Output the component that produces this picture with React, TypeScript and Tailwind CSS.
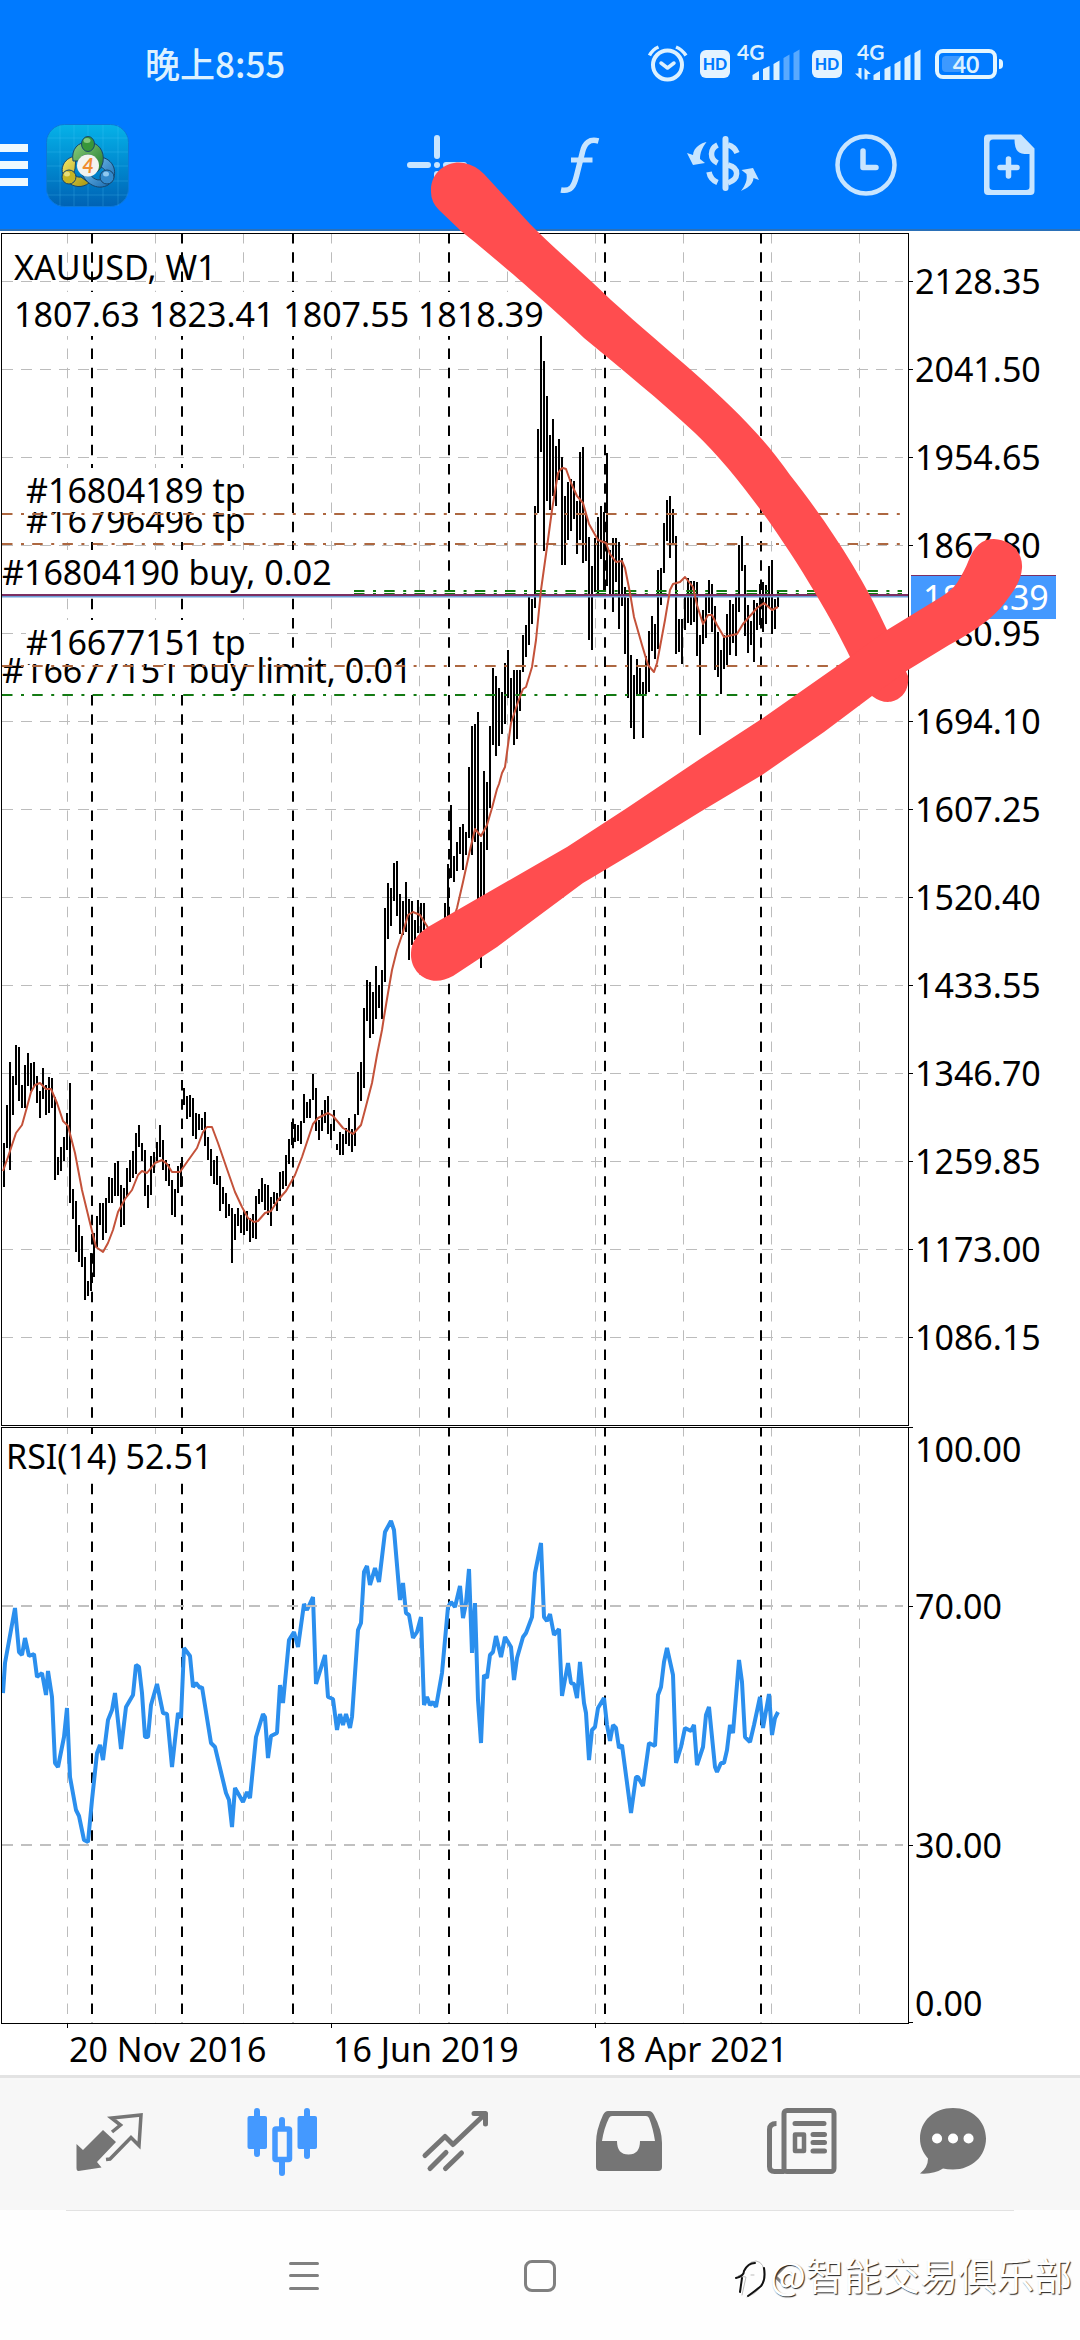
import React from "react";

/* High / low pairs of the weekly bars, one bar every 3 units starting at x = 4 */
const BARS: number[] = [
  1143, 1187, 1105, 1148, 1062, 1170, 1076, 1115, 1045, 1085, 1047, 1101, 1085, 1108, 1065, 1108, 1053, 1086, 1063, 1091,
  1062, 1087, 1076, 1103, 1091, 1118, 1068, 1099, 1085, 1115, 1077, 1113, 1078, 1108, 1097, 1180, 1157, 1175, 1147, 1171,
  1137, 1161, 1113, 1150, 1083, 1203, 1189, 1219, 1201, 1252, 1225, 1262, 1236, 1267, 1257, 1300, 1281, 1296, 1253, 1291,
  1233, 1277, 1216, 1247, 1203, 1225, 1203, 1240, 1198, 1233, 1177, 1203, 1178, 1203, 1163, 1196, 1161, 1196, 1185, 1227,
  1188, 1225, 1168, 1197, 1160, 1182, 1151, 1178, 1133, 1174, 1125, 1147, 1143, 1161, 1150, 1196, 1185, 1208, 1156, 1195,
  1152, 1173, 1142, 1161, 1125, 1157, 1140, 1170, 1160, 1181, 1164, 1186, 1180, 1215, 1189, 1217, 1166, 1193, 1163, 1187,
  1088, 1105, 1096, 1119, 1095, 1117, 1098, 1136, 1113, 1139, 1114, 1130, 1118, 1130, 1112, 1146, 1137, 1160, 1149, 1176,
  1160, 1184, 1156, 1185, 1176, 1211, 1187, 1204, 1193, 1218, 1204, 1216, 1208, 1263, 1214, 1240, 1208, 1226, 1215, 1233,
  1210, 1235, 1211, 1231, 1218, 1242, 1214, 1238, 1196, 1239, 1189, 1204, 1178, 1202, 1184, 1210, 1185, 1215, 1197, 1226,
  1192, 1204, 1193, 1211, 1172, 1201, 1171, 1189, 1155, 1186, 1139, 1164, 1122, 1145, 1124, 1142, 1125, 1141, 1121, 1144,
  1094, 1123, 1102, 1118, 1099, 1118, 1074, 1100, 1088, 1131, 1120, 1140, 1110, 1131, 1100, 1123, 1096, 1134, 1124, 1140,
  1110, 1131, 1144, 1150, 1132, 1155, 1134, 1155, 1128, 1144, 1118, 1146, 1129, 1152, 1114, 1146, 1072, 1115, 1062, 1101,
  1008, 1088, 980, 1021, 982, 1038, 992, 1034, 966, 1019, 985, 1008, 970, 1019, 908, 982, 883, 939, 888, 926,
  863, 901, 861, 916, 894, 934, 901, 935, 882, 932, 899, 960, 901, 945, 920, 940, 900, 933, 903, 933,
  903, 930, 940, 950, 940, 950, 940, 950, 940, 950, 940, 950, 935, 950, 903, 920, 864, 917, 805, 878,
  856, 882, 842, 871, 827, 854, 824, 870, 832, 855, 767, 838, 726, 855, 724, 842, 712, 900, 842, 968,
  771, 900, 782, 850, 726, 808, 668, 745, 676, 756, 688, 746, 692, 734, 663, 724, 650, 698, 678, 722,
  670, 745, 670, 739, 670, 711, 635, 672, 625, 657, 596, 645, 599, 624, 506, 608, 429, 513, 336, 452,
  361, 551, 396, 501, 435, 510, 419, 496, 446, 506, 439, 480, 457, 565, 496, 565, 482, 540, 479, 531,
  481, 519, 501, 554, 452, 540, 447, 563, 515, 561, 537, 640, 566, 650, 538, 592, 517, 595, 506, 559,
  512, 590, 453, 586, 550, 597, 538, 612, 538, 582, 542, 629, 558, 606, 587, 654, 598, 698, 655, 728,
  675, 739, 659, 696, 668, 694, 682, 738, 656, 694, 631, 692, 616, 651, 624, 659, 570, 649, 568, 605,
  523, 573, 500, 541, 496, 558, 509, 543, 536, 654, 619, 652, 619, 664, 596, 630, 578, 623, 581, 625,
  581, 622, 582, 656, 635, 735, 610, 644, 594, 638, 580, 613, 584, 632, 606, 670, 632, 677, 650, 694,
  635, 669, 614, 665, 600, 655, 604, 643, 596, 656, 545, 612, 536, 571, 565, 636, 605, 653, 621, 645,
  600, 662, 603, 630, 584, 625, 582, 632, 585, 624, 566, 607, 560, 634, 599, 629, 590, 607,
];

const barPath = Array.from({ length: BARS.length / 2 }, (_, i) => `M${4 + i * 3} ${BARS[2 * i]}V${BARS[2 * i + 1]}`).join("");

const MOVING_AVERAGE =
  "3,1171 8,1157 13,1142 16,1133 22,1125 27,1107 31,1092 35,1085 40,1083 46,1089 51,1089 57,1103 63,1121 68,1126 75,1153 82,1190 90,1223 96,1247 103,1252 108,1243 113,1230 118,1212 125,1199 132,1190 138,1175 142,1171 147,1173 155,1163 162,1160 167,1164 172,1172 180,1172 187,1162 197,1148 203,1132 207,1127 212,1127 218,1143 228,1172 235,1192 242,1207 248,1218 254,1222 258,1221 265,1213 271,1211 278,1200 286,1191 295,1175 302,1157 313,1124 318,1118 328,1113 333,1116 343,1128 353,1134 361,1125 365,1110 372,1083 377,1055 382,1030 384,1017 388,993 392,970 397,950 403,932 408,915 413,912 420,915 427,926 440,950 450,930 457,908 463,882 470,850 475,829 481,836 487,825 492,808 497,789 499,784 502,773 505,767 508,745 511,723 518,702 523,689 526,687 532,667 536,640 541,590 547,547 552,510 558,473 561,469 563,468 566,469 571,483 577,496 583,503 589,524 598,540 606,543 610,554 616,562 622,561 625,568 630,593 634,617 642,645 648,665 654,672 657,663 665,620 670,590 673,584 680,582 685,577 693,587 697,605 703,624 708,615 712,615 717,625 724,637 737,634 743,624 757,608 764,603 772,610 778,607";

const RSI =
  "3,1693 5,1663 15,1608 19,1652 22,1655 25,1638 29,1656 34,1654 37,1677 42,1673 46,1695 48,1671 52,1697 55,1763 58,1767 64,1737 67,1708 70,1777 76,1810 79,1816 84,1840 88,1842 92,1800 97,1753 100,1745 103,1760 108,1720 112,1710 115,1693 121,1749 126,1707 133,1695 136,1665 139,1667 142,1693 145,1737 148,1737 151,1705 157,1684 163,1713 167,1714 172,1767 178,1713 181,1718 184,1648 190,1656 193,1687 196,1683 200,1688 202,1687 211,1743 215,1747 226,1793 229,1800 232,1827 235,1788 243,1802 247,1792 250,1798 256,1737 263,1714 265,1717 268,1758 271,1736 277,1733 280,1685 283,1703 289,1640 294,1632 298,1647 304,1604 307,1610 313,1597 316,1684 325,1655 328,1697 333,1699 337,1730 340,1714 343,1725 346,1714 350,1728 352,1717 358,1630 361,1623 364,1572 367,1566 370,1585 375,1568 379,1582 385,1532 391,1521 394,1530 400,1600 403,1583 406,1613 409,1615 413,1638 417,1632 421,1617 424,1705 427,1697 430,1705 433,1702 436,1707 442,1673 448,1607 451,1602 455,1607 460,1586 463,1618 466,1603 469,1569 472,1653 475,1603 478,1700 481,1743 484,1675 487,1678 490,1655 493,1652 496,1636 501,1657 505,1637 511,1647 514,1680 517,1658 523,1637 526,1633 532,1617 535,1573 541,1543 544,1617 547,1621 550,1614 554,1635 559,1629 562,1696 568,1663 571,1683 574,1684 577,1698 580,1662 584,1703 586,1713 589,1760 592,1730 595,1727 598,1708 604,1698 607,1725 610,1741 613,1725 616,1728 619,1748 622,1745 631,1813 636,1777 638,1777 643,1786 649,1743 655,1746 658,1695 661,1687 664,1662 667,1648 673,1675 676,1763 681,1747 685,1728 691,1731 694,1725 697,1765 703,1747 706,1715 709,1707 715,1767 717,1772 721,1763 724,1763 727,1750 730,1725 733,1733 739,1660 742,1682 745,1737 750,1742 754,1725 760,1697 763,1728 769,1694 772,1735 775,1718 778,1712";

const GRID_X = [67, 155, 243, 331, 419, 507, 595, 683, 771, 859];
const YEAR_X = [92, 182, 293, 449, 605, 761];
const PRICES = ["2128.35", "2041.50", "1954.65", "1867.80", "1780.95", "1694.10", "1607.25", "1520.40", "1433.55", "1346.70", "1259.85", "1173.00", "1086.15"];

function Columns({ from, to }: { from: number; to: number }) {
  return (
    <g strokeDasharray="10.5 8.75">
      <path d={GRID_X.map((x) => `M${x + 0.5} ${from}V${to}`).join("")} stroke="#bcbcbc" strokeWidth="1" />
      <path d={YEAR_X.map((x) => `M${x} ${from}V${to}`).join("")} stroke="#000" strokeWidth="2" />
    </g>
  );
}

function StatusIcons() {
  return (
    <div className="flex items-center text-[#dcf1ff]">
      <svg className="h-10 w-10" viewBox="648 44 40 40" fill="none" stroke="currentColor" strokeWidth="4" aria-label="Alarm">
        <circle cx="667.5" cy="65" r="14.5" />
        <path d="M661 63l6.500 5 6.500-5" strokeWidth="3.500" strokeLinecap="round" strokeLinejoin="round" />
        <path d="M649.500 55.500q3-6 9-8.500M676 47q6 2.500 10 8.500" strokeWidth="3.500" />
      </svg>
      <span className="ml-3 flex h-7 w-[30px] items-center justify-center rounded-md bg-[#e4f3ff] font-['Lato'] text-[16px] leading-none font-black text-[#007aff]">HD</span>
      <svg className="ml-[6px] h-14 w-[66px]" viewBox="736 36 66 56" fill="currentColor" aria-label="Signal 1">
        <text x="737" y="60" fontFamily="Lato, sans-serif" fontSize="21" fontWeight="700">4G</text>
        <path d="M752.500 75l6.500-4v9h-6.500zM763 69l6.500-3v14H763zM773.500 64l6-3.500V80h-6z" />
        <path d="M783.500 58l6-3.500V80h-6zM793.500 53l6-3.500V80h-6z" opacity=".4" />
      </svg>
      <span className="ml-[10px] flex h-7 w-[30px] items-center justify-center rounded-md bg-[#e4f3ff] font-['Lato'] text-[16px] leading-none font-black text-[#007aff]">HD</span>
      <svg className="ml-3 h-14 w-[68px]" viewBox="854 36 68 56" fill="currentColor" aria-label="Signal 2">
        <text x="857" y="60" fontFamily="Lato, sans-serif" fontSize="21" fontWeight="700">4G</text>
        <path d="M858.500 68h3v11.500l-6.500-6h3.500zM864.500 79.500V68l6.500 6h-3.500v5.500z" />
        <path d="M873.500 75l6.500-4v9h-6.500zM884.500 69l6-3v14h-6zM894.500 64l6-3.500V80h-6zM904.500 58l6-3.500V80h-6zM914.500 53l6-3.500V80h-6z" />
      </svg>
      <div className="relative ml-[13px] flex h-[30px] w-[62px] items-center justify-center rounded-lg border-4 border-[#e4f6ff]">
        <span className="absolute top-[3px] left-[3px] h-4 w-5 rounded-sm bg-[#3d99ff]" />
        <span className="relative font-['Lato'] text-[23px] leading-none font-bold">40</span>
      </div>
      <span className="ml-[2px] h-[10px] w-1 rounded-r bg-[#e4f6ff]" />
    </div>
  );
}

function AppLogo() {
  return (
    <svg className="ml-[18px] h-[83px] w-[83px]" viewBox="46 123 83 83" role="img" aria-label="MetaTrader 4">
      <defs>
        <linearGradient id="tile" x1="0" y1="0" x2="0" y2="1">
          <stop offset="0" stopColor="#06b2e8" />
          <stop offset=".5" stopColor="#0089cf" />
          <stop offset="1" stopColor="#0062b4" />
        </linearGradient>
        <linearGradient id="green" x1="0" y1="0" x2="1" y2="1">
          <stop offset="0" stopColor="#8fd07e" />
          <stop offset="1" stopColor="#1d7a2c" />
        </linearGradient>
        <linearGradient id="yellow" x1="0" y1="0" x2="1" y2="1">
          <stop offset="0" stopColor="#f4e96c" />
          <stop offset="1" stopColor="#a6940c" />
        </linearGradient>
        <linearGradient id="blue" x1="0" y1="0" x2="1" y2="1">
          <stop offset="0" stopColor="#86ccf5" />
          <stop offset="1" stopColor="#0f64ad" />
        </linearGradient>
      </defs>
      <rect x="46.500" y="123.500" width="82" height="82" rx="18" fill="url(#tile)" stroke="#0c78d8" />
      <path d="M60 124v81M74 124v81M88 124v81M103 124v81M118 124v81M47 137h81M47 151h81M47 165h81M47 180h81M47 194h81" stroke="#5fd0ff" strokeOpacity=".22" strokeWidth="1" />
      <g stroke="#17456b" strokeWidth="1">
        <path d="M76 155c-14 2-18 16-9 25 6 7 16 7 22 2l-8-6c-6 1-8-4-6-8z" fill="url(#yellow)" />
        <path d="M101 156c15 3 18 20 7 28-9 5-20 1-26-11l8 0c4 7 12 8 15 2 2-4 0-7-4-9z" fill="url(#blue)" />
        <path d="M73 160c-2-12 5-19 15-19s17 9 15 20c-1 4-3 8-6 10l-2-10c0-5-2-7-7-7-6 0-8 3-8 6z" fill="url(#green)" />
        <ellipse cx="88" cy="143" rx="6.500" ry="7.500" fill="#38963a" />
        <ellipse cx="69" cy="176" rx="7" ry="7" fill="#c5b424" />
        <ellipse cx="107" cy="176" rx="7" ry="7" fill="#3389cb" />
      </g>
      <ellipse cx="87" cy="139.500" rx="3.500" ry="2.500" fill="#a5dd98" opacity=".7" />
      <ellipse cx="67" cy="173" rx="3" ry="2.500" fill="#f7f0a0" opacity=".7" />
      <ellipse cx="106" cy="173" rx="3" ry="2.500" fill="#b7e2ff" opacity=".7" />
      <circle cx="88" cy="164.500" r="11" fill="#f3f3f1" />
      <text x="88" y="172" textAnchor="middle" fontFamily="Lato, sans-serif" fontSize="20" fontWeight="700" fontStyle="italic" fill="#f08c30">4</text>
    </svg>
  );
}

function ToolButton({ label, viewBox, children }: { label: string; viewBox: string; children: React.ReactNode }) {
  return (
    <button aria-label={label} className="flex w-[143px] items-center justify-center text-[#c8e5ff]">
      <svg className="h-16 w-20" viewBox={viewBox} fill="none" stroke="currentColor">
        {children}
      </svg>
    </button>
  );
}

function TabButton({ label, viewBox, active, narrow, children }: { label: string; viewBox: string; active?: boolean; narrow?: boolean; children: React.ReactNode }) {
  return (
    <button aria-label={label} className={`flex items-center justify-center ${narrow ? "w-[131px]" : "w-[173px]"} ${active ? "text-[#4499ff]" : "text-[#757575]"}`}>
      <svg className="h-[72px] w-[72px]" viewBox={viewBox} fill="none" stroke="currentColor">
        {children}
      </svg>
    </button>
  );
}

const label = "absolute bg-white leading-[44px] whitespace-nowrap";

function PricePane() {
  return (
    <section className="flex text-[34px]" aria-label="Price chart">
      <div className="relative ml-px h-[1193px] flex-1 border border-black">
        <svg className="absolute inset-0 h-full w-full" viewBox="2 234 906 1191" preserveAspectRatio="none" fill="none">
          <path d={PRICES.map((_, i) => `M2 ${281.5 + i * 88}H903`).join("")} stroke="#bcbcbc" strokeDasharray="11 8" />
          <Columns from={233} to={1425} />
          <path d={barPath} stroke="#000" strokeWidth="2" />
        </svg>
        <span className="absolute top-[11px] left-3 leading-[44px] whitespace-nowrap">XAUUSD, W1</span>
        <span className={`${label} top-[58px] left-3`}>1807.63 1823.41 1807.55 1818.39</span>
        <span className={`${label} top-[264px] left-6`}>#16796496 tp</span>
        <span className={`${label} top-[234px] left-6`}>#16804189 tp</span>
        <span className={`${label} top-[316px] left-0`}>#16804190 buy, 0.02</span>
        <span className={`${label} top-[414px] left-0`}>#16677151 buy limit, 0.01</span>
        <span className={`${label} top-[386px] left-6`}>#16677151 tp</span>
        <svg className="absolute inset-0 h-full w-full" viewBox="2 234 906 1191" preserveAspectRatio="none" fill="none">
          <g strokeDasharray="10.500 8.500 3 8.200" strokeWidth="2">
            <path d="M2 514H902M2 544H902M2 666H902" stroke="#ad6740" />
            <path d="M2 695H902M354 591H902" stroke="#137a13" />
            <path d="M354 593.500H902" stroke="#137a13" strokeWidth="1" />
          </g>
          <path d="M2 596.500H908" stroke="#6f9fd8" strokeWidth="2" />
          <path d="M2 595H908" stroke="#7c2f63" strokeWidth="2" />
          <polyline points={MOVING_AVERAGE} stroke="#c4523a" strokeWidth="2" strokeLinejoin="round" />
        </svg>
      </div>
      <div className="relative w-[171px] pt-1">
        <ul>
          {PRICES.map((p) => (
            <li key={p} className="flex h-[88px] items-center leading-[44px]">
              <span className="mr-[2px] h-px w-1 bg-black" />
              {p}
            </li>
          ))}
        </ul>
        <div className="absolute top-[342px] left-[2px] w-[145px] border-t border-[#7c2f63] bg-[#4499ff] pl-3 leading-[43px] text-white">1818.39</div>
      </div>
    </section>
  );
}

function RsiPane() {
  const row = "flex leading-[40px]";
  const tick = "mr-[2px] h-px w-1 bg-black";
  return (
    <section className="mt-px flex text-[34px]" aria-label="RSI indicator">
      <div className="relative ml-px h-[597px] flex-1 border border-black">
        <svg className="absolute inset-0 h-full w-full" viewBox="2 1428 906 595" preserveAspectRatio="none" fill="none">
          <Columns from={1426} to={2023} />
          <polyline points={RSI} stroke="#2b8fee" strokeWidth="4" strokeLinejoin="bevel" />
          <path d="M2 1606H903M2 1845H903" stroke="#c0c0c0" strokeWidth="2" strokeDasharray="11 8" />
        </svg>
        <span className={`${label} top-[6px] left-1`}>RSI(14) 52.51</span>
      </div>
      <ul className="w-[171px]">
        <li className={`${row} h-11 items-center`}>
          <span className={`${tick} self-start`} />
          100.00
        </li>
        <li className={`${row} h-[270px] items-center`}>
          <span className={tick} />
          70.00
        </li>
        <li className={`${row} h-[208px] items-center`}>
          <span className={tick} />
          30.00
        </li>
        <li className={`${row} h-[74px] items-end`}>
          <span className={tick} />
          0.00
        </li>
      </ul>
    </section>
  );
}

export default function App() {
  return (
    <div className="relative min-h-[2340px] overflow-hidden bg-white font-['Noto_Sans','Noto_Sans_CJK_SC',sans-serif] text-black">
      <header className="border-b-2 border-[#2a70b8] bg-[#007aff]">
        <div className="flex h-32 items-center justify-between pr-[77px] pl-[145px]">
          <time className="pb-1 font-['Noto_Sans_CJK_SC',sans-serif] text-[35px] leading-none font-medium text-[#dcf1ff]">晚上8:55</time>
          <StatusIcons />
        </div>
        <div className="flex h-[101px] items-center pb-[27px]">
          <button aria-label="Menu" className="flex w-7 flex-col gap-[9px]">
            <span className="h-2 bg-[#eef9ff]" />
            <span className="h-2 bg-[#eef9ff]" />
            <span className="h-2 bg-[#eef9ff]" />
          </button>
          <AppLogo />
          <nav className="ml-auto flex">
            <ToolButton label="Crosshair" viewBox="396 133 80 64">
              <path d="M436 138v18M436 174v18M409 165h18M445 165h18" strokeWidth="6" strokeLinecap="round" />
              <circle cx="436" cy="165" r="3" fill="currentColor" stroke="none" />
            </ToolButton>
            <ToolButton label="Indicators" viewBox="539 133 80 64">
              <path d="M560 190c10 2 13-4 15.500-14l6-24c2-9 7-13.500 16-11" strokeWidth="5.500" />
              <path d="M570 160h21.500" strokeWidth="5" />
            </ToolButton>
            <ToolButton label="Symbols" viewBox="682 133 80 64">
              <path d="M724.500 139v49" strokeWidth="6" strokeLinecap="round" />
              <path d="M716.500 145c-8 4-8 14 0 18M708 172c1 6 4 8.500 8.500 10.500M727 145c4 1 7 3 9 8M727 165c12 3 11 14 0 18" strokeWidth="5.500" />
              <path d="M705.500 142c-5 1-13 5-13.500 13l-6-2 6 12 12-2-5-4c0-6 2-11 6.500-17zM740 191c6-3 12-6 12.500-13l5.500 2-6-12-11.500 2 5 4c1 6-1 11-5.500 17z" fill="currentColor" stroke="none" />
            </ToolButton>
            <ToolButton label="Timeframe" viewBox="825 133 80 64">
              <circle cx="865" cy="165" r="28.500" strokeWidth="4.500" />
              <path d="M862 151v16.500h13" strokeWidth="5.500" strokeLinecap="round" strokeLinejoin="round" />
            </ToolButton>
            <ToolButton label="New order" viewBox="968 133 80 64">
              <path fillRule="evenodd" d="M987 134.500h33l13.500 14V191q0 4-4 4H987q-4 0-4-4v-52.500q0-4 4-4zM992 139.500q-3.500 0-3.500 3.500v44q0 3 3.500 3h33q3.500 0 3.500-3v-33h-5q-10 0-10-14.500z" fill="currentColor" stroke="none" />
              <path d="M1007.500 159v17M999 167.500h17" strokeWidth="5.500" strokeLinecap="round" />
            </ToolButton>
          </nav>
        </div>
      </header>

      <main className="pt-[2px]">
        <PricePane />
        <RsiPane />
        <div className="flex h-[51px] pl-[67px] text-[34px] leading-[50px] whitespace-nowrap">
          {["20 Nov 2016", "16 Jun 2019", "18 Apr 2021"].map((d) => (
            <div key={d} className="flex w-[264px]">
              <span className="mr-px h-1 w-px bg-black" />
              {d}
            </div>
          ))}
        </div>
      </main>

      <nav className="flex h-[135px] items-center border-t-[3px] border-[#e3e3e3] bg-[#f7f7f7] pl-[22px]">
        <TabButton label="Quotes" viewBox="72 2108 72 72">
          <path d="M75.500 2144l6.500 6 20-20 13 12-19 20 4.500 5.500-23 3.500q-2 0-2-3z" fill="currentColor" stroke="none" />
          <path d="M111 2132l8.500-7-9-7 29.500-3-2 30.500-8-8-21 21.500-4 .5" strokeWidth="3.500" />
        </TabButton>
        <TabButton label="Charts" viewBox="245 2108 72 72" active>
          <path d="M256 2111v43M306 2111v45M281 2120v8M281 2162v11" strokeWidth="6" strokeLinecap="round" />
          <rect x="246.500" y="2116" width="19.500" height="33" rx="2" fill="currentColor" stroke="none" />
          <rect x="296.500" y="2116" width="19.500" height="33" rx="2" fill="currentColor" stroke="none" />
          <rect x="274" y="2129" width="14.500" height="30.500" rx="1" strokeWidth="5.500" />
        </TabButton>
        <TabButton label="Trade" viewBox="418 2108 72 72">
          <path d="M424 2155.500l20-19 8 8 31.500-30M429 2168.500l16-16M444.500 2168.500l16-15.500M473 2113.500h11.500V2124" strokeWidth="5" strokeLinecap="round" strokeLinejoin="round" />
        </TabButton>
        <TabButton label="History" viewBox="591 2108 72 72">
          <path fillRule="evenodd" d="M607 2111h41q3 0 5 4 8 15 8 28v24q0 4-4 4h-58q-4 0-4-4v-24q0-13 7-28 2-4 5-4zM611 2116q-2 0-3 2-5 10-7 23h15q0 13.500 11.500 13.500t11.500-13.500h15q-2-13-6-23-1-2-3-2z" fill="currentColor" stroke="none" />
        </TabButton>
        <TabButton label="News" viewBox="764 2108 72 72">
          <rect x="783" y="2110.500" width="50" height="61" rx="3" strokeWidth="5" />
          <path d="M775.500 2123.500q-7 0-7 6v37q0 5 5 5h10" strokeWidth="5" />
          <path d="M794 2123.500h29M812 2134.500h11.500M812 2142.500h11.500M812 2151h11.500" strokeWidth="5" strokeLinecap="round" />
          <rect x="794" y="2134.500" width="9" height="16.500" strokeWidth="4.500" strokeLinejoin="round" />
        </TabButton>
        <TabButton label="Messages" viewBox="917 2108 72 72" narrow>
          <path d="M953 2108c19 0 33 13 33 30.500s-14 31-33 31q-6 0-10-1-9 6-23 5 8-6 8-15c-5-6-8-12-8-20 0-17.500 14-30.500 33-30.500z" fill="currentColor" stroke="none" />
          <path d="M937 2138.500h.1M953 2138.500h.1M968.500 2138.500h.1" stroke="#fff" strokeWidth="10" strokeLinecap="round" />
        </TabButton>
      </nav>

      <footer className="relative h-[130px] bg-[#fefefe]">
        <div className="mx-[66px] h-px bg-[#e2e2e2]" />
        <div className="grid h-[129px] grid-cols-3 items-center px-[66px]">
          <button aria-label="Recent apps" className="mr-[63px] flex h-7 w-[30px] flex-col justify-between justify-self-end">
            <span className="h-[3px] rounded bg-[#808080]" />
            <span className="h-[3px] rounded bg-[#808080]" />
            <span className="h-[3px] rounded bg-[#808080]" />
          </button>
          <button aria-label="Home" className="h-8 w-8 justify-self-center rounded-lg border-[3px] border-[#808080]" />
          <button aria-label="Back" className="ml-[72px] justify-self-start">
            <svg className="h-8 w-6" viewBox="0 0 24 32" fill="none" stroke="#808080" strokeWidth="3">
              <path d="M16 5L5 16l11 11" />
            </svg>
          </button>
        </div>
        <div className="absolute right-2 bottom-10 flex items-center gap-1 text-[38px] leading-[48px] whitespace-nowrap text-white [text-shadow:1px_1px_1px_#222]">
          <svg className="mt-2 h-11 w-8" viewBox="0 0 32 44" fill="none" strokeLinecap="round">
            <path d="M8 39l4-18-8-1 5-2q3-12 13-13 9 1 8 16-1 14-17 20M17 19h3" stroke="#bbb" strokeWidth="1" />
            <path d="M6 36l2-14M2 22q8-2 8-7 4-8 11-8M30 12q2 12-3 18-7 6-13 10" stroke="#111" strokeWidth="2" />
          </svg>
          <span className="font-['Noto_Sans_CJK_SC',sans-serif]">@智能交易俱乐部</span>
        </div>
      </footer>

      {/* Freehand wedge drawn over the chart */}
      <svg className="pointer-events-none absolute top-0 left-0 w-full" viewBox="0 0 1080 2340" fill="#ff4d4f" aria-hidden="true">
        <path d="M431 192C430 170 450 160 464 163Q475 165 484 174L530 224C555 249 585 275 611 300C683 365 745 410 790 475C820 513 860 570 887 630L908 676C910 695 896 702 888 702Q880 702 872 696L850 657C825 605 760 495 695 433C660 400 620 368 584 338C560 315 500 262 461 231L439 210Q431 202 431 192Z" />
        <path d="M411 953Q411 938 428 927L487 893 567 847 627 808 700 759 763 718 850 657 887 630 941 597Q952 590 957 583 965 570 968 562C974 546 982 539 994 539C1012 540 1023 553 1022 568Q1021 582 1009 597 1001 609 988 620 970 634 949 645L908 670 872 696 824 732 762 775 700 812 640 849 583 883 497 947 453 976C430 989 410 973 411 953Z" />
      </svg>
    </div>
  );
}
